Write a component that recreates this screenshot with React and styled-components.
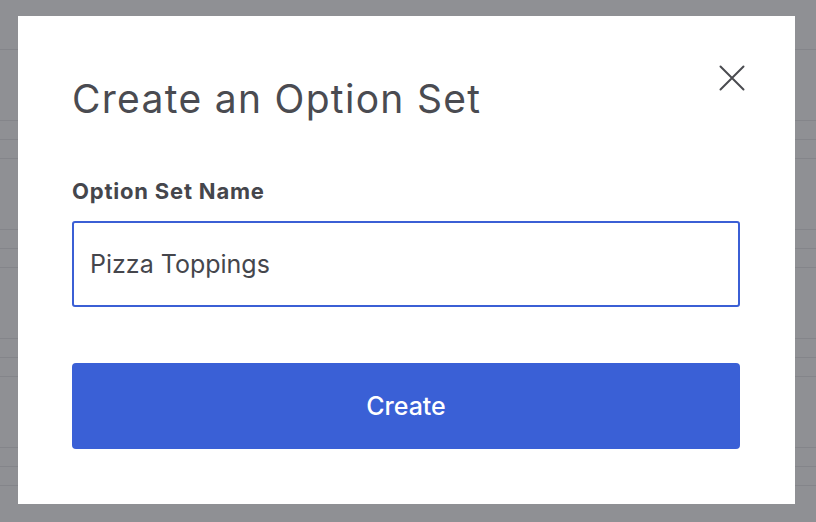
import styled, { createGlobalStyle } from "styled-components";

const GlobalStyle = createGlobalStyle`
  * {
    box-sizing: border-box;
  }

  body {
    margin: 0;
    font-family: Inter, "Noto Sans", "Liberation Sans", sans-serif;
  }
`;

const Page = styled.div`
  position: relative;
  width: 816px;
  height: 522px;
  overflow: hidden;
  background-color: #8f9094;
`;

const BackRow = styled.div`
  height: ${(p) => p.$h}px;
  border-bottom: 1px solid #84858a;
`;

const Modal = styled.div`
  position: absolute;
  top: 16px;
  left: 18px;
  width: 777px;
  height: 488px;
  background-color: #fff;
  padding: 0 55px 0 54px;
  display: flex;
  flex-direction: column;
`;

const CloseButton = styled.button`
  position: absolute;
  top: 48px;
  right: 49px;
  width: 28px;
  height: 28px;
  padding: 0;
  border: none;
  background: none;
  cursor: pointer;
  display: flex;
  align-items: center;
  justify-content: center;
`;

const Title = styled.h1`
  margin: 59px 0 0;
  font-size: 39px;
  line-height: 47px;
  font-weight: 400;
  color: #4a4b51;
  letter-spacing: 1.3px;
`;

const Label = styled.label`
  display: block;
  margin-top: 56px;
  font-size: 22px;
  line-height: 26px;
  font-weight: 700;
  color: #45464c;
  letter-spacing: 0.8px;
`;

const Input = styled.input`
  display: block;
  width: 100%;
  height: 86px;
  margin-top: 17px;
  padding: 0 16px;
  border: 2px solid #3b5fd5;
  border-radius: 3px;
  outline: none;
  font-family: inherit;
  font-size: 25px;
  color: #45464c;
  background-color: #fff;
`;

const SubmitButton = styled.button`
  width: 100%;
  height: 86px;
  margin-top: 56px;
  border: none;
  border-radius: 4px;
  background-color: #3a60d6;
  color: #fff;
  font-family: inherit;
  font-size: 25px;
  font-weight: 500;
  cursor: pointer;
`;

const rows = [50, 71, 19, 19, 71, 19, 19, 71, 19, 19, 71, 19, 19];

const App = () => {
  return (
    <Page>
      <GlobalStyle />
      {rows.map((h, i) => (
        <BackRow key={i} $h={h} />
      ))}
      <Modal>
        <CloseButton aria-label="Close">
          <svg width="26" height="26" viewBox="0 0 26 26">
            <path
              d="M1.5 1.5 L24.5 24.5 M24.5 1.5 L1.5 24.5"
              stroke="#4a4b50"
              strokeWidth="2"
              strokeLinecap="round"
            />
          </svg>
        </CloseButton>
        <Title>Create an Option Set</Title>
        <Label htmlFor="optionSetName">Option Set Name</Label>
        <Input id="optionSetName" defaultValue="Pizza Toppings" />
        <SubmitButton>Create</SubmitButton>
      </Modal>
    </Page>
  );
};

export default App;
